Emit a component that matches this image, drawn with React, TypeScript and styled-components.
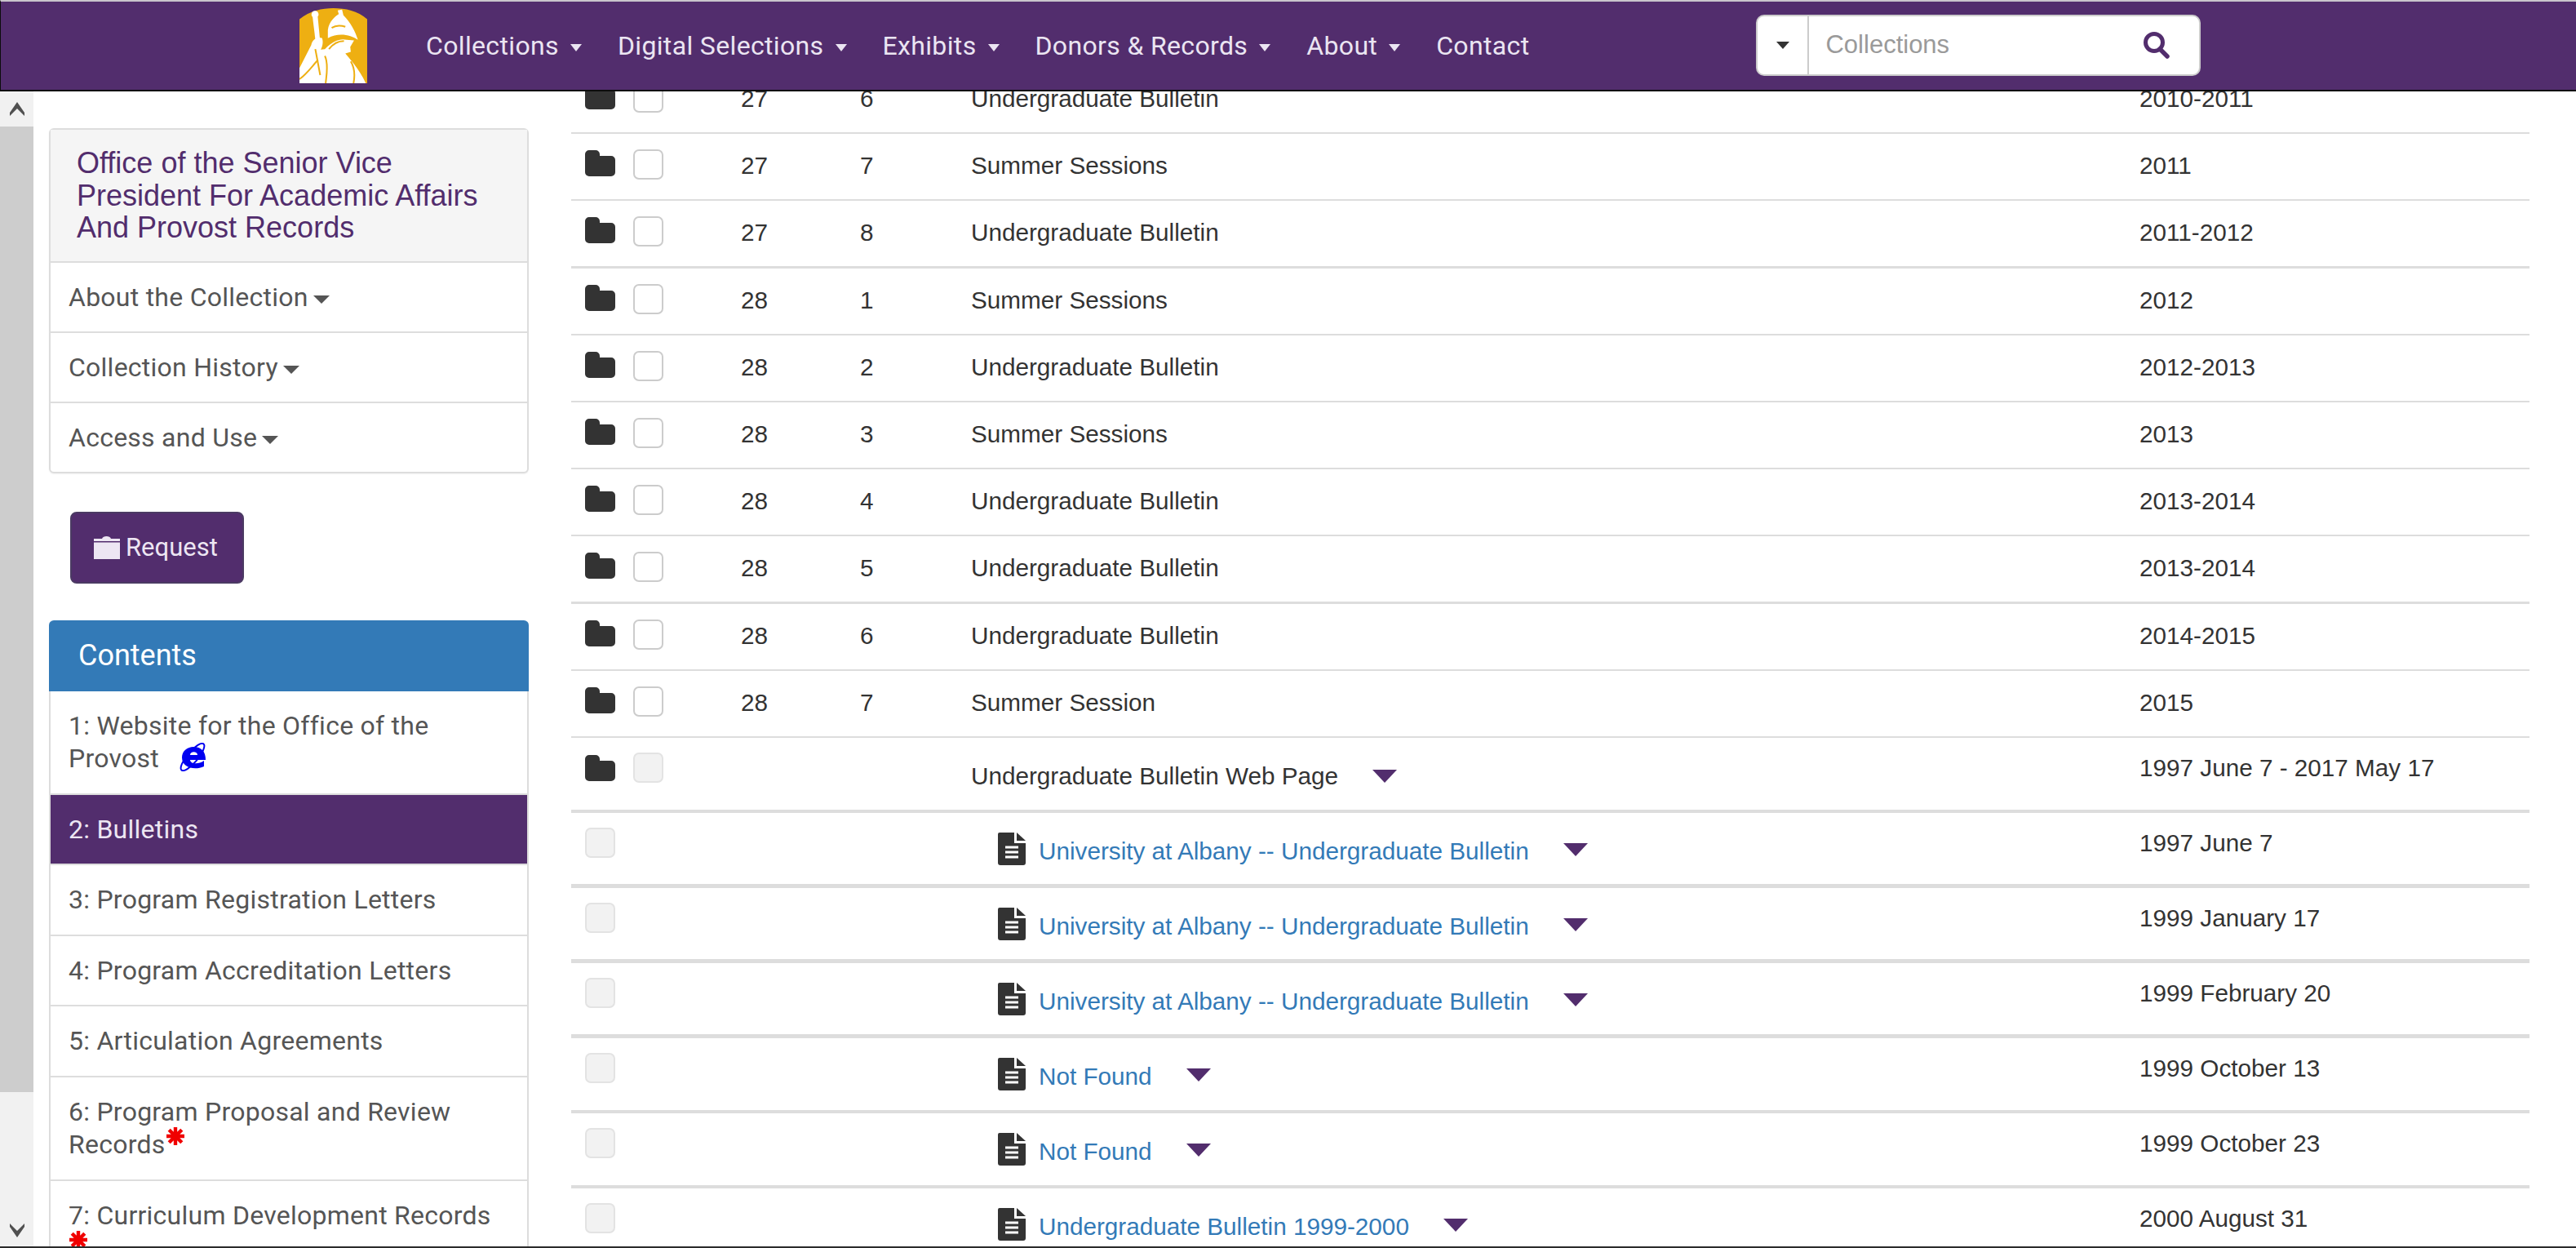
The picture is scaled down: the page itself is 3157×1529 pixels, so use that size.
import React from "react";
import styled, { createGlobalStyle } from "styled-components";

const PURPLE = "#522d6d";
const LINE = "#dddddd";
const ARIAL = `"Liberation Sans", Arial, sans-serif`;
const ROBOTO = `Roboto, "Liberation Sans", sans-serif`;

const Global = createGlobalStyle`
  html, body { margin: 0; padding: 0; height: 100%; overflow: hidden; background: #fff; }
  * { box-sizing: border-box; }
`;

const Page = styled.div`
  width: 3157px;
  height: 1529px;
  display: flex;
  flex-direction: column;
  overflow: hidden;
  background: #fff;
  border-bottom: 2px solid #2b2b2b;
  font-family: ${ARIAL};
`;

const Header = styled.header`
  flex: none;
  height: 112px;
  display: flex;
  align-items: center;
  background: ${PURPLE};
  border-top: 2px solid #c9c5cc;
  border-bottom: 2px solid #0c0c0c;
  border-left: 1px solid #0c0c0c;
  padding-left: 366px;
`;

const LogoMark = styled.svg`
  flex: none;
  width: 83px;
  height: 92px;
  margin-right: 50px;
`;

const NavItem = styled.a`
  flex: none;
  display: flex;
  align-items: center;
  gap: 14px;
  padding: 0 22px;
  margin-top: -1px;
  font: 400 32px/40px ${ROBOTO};
  letter-spacing: 0.35px;
  color: #ebe5f2;
`;

const NavCaret = styled.span`
  width: 0;
  height: 0;
  margin-top: 6px;
  border-left: 7px solid transparent;
  border-right: 7px solid transparent;
  border-top: 9px solid #ebe5f2;
`;

const SearchBox = styled.div`
  flex: none;
  width: 545px;
  height: 75px;
  margin-left: 256px;
  margin-top: -2px;
  display: flex;
  align-items: stretch;
  background: #fff;
  border: 2px solid #cccccc;
  border-radius: 10px;
`;

const SearchToggle = styled.div`
  flex: none;
  width: 63px;
  display: flex;
  align-items: center;
  justify-content: center;
  border-right: 2px solid #cccccc;
`;

const SearchCaret = styled.span`
  width: 0;
  height: 0;
  border-left: 8px solid transparent;
  border-right: 8px solid transparent;
  border-top: 9px solid #333;
`;

const SearchText = styled.div`
  flex: 1;
  display: flex;
  align-items: center;
  justify-content: space-between;
  padding: 0 36px 0 20px;
  font: 400 31px/40px ${ARIAL};
  color: #9a9a9a;
`;

const Body = styled.div`
  flex: 1;
  min-height: 0;
  display: flex;
`;

const Side = styled.aside`
  flex: none;
  width: 700px;
  display: flex;
  overflow: hidden;
`;

const ScrollBar = styled.div`
  flex: none;
  width: 41px;
  display: flex;
  flex-direction: column;
  background: #f1f1f1;
`;

const ScrollButton = styled.div<{ $h: number }>`
  flex: none;
  height: ${(p) => p.$h}px;
  display: flex;
  align-items: center;
  justify-content: center;
`;

const ScrollThumb = styled.div`
  flex: none;
  height: 1183px;
  background: #cdcdcd;
`;

const ScrollSpace = styled.div`
  flex: 1;
`;

const SideInner = styled.div`
  flex: none;
  width: 607px;
  padding: 45px 0 0 19px;
`;

const InfoPanel = styled.section`
  width: 588px;
  border: 2px solid ${LINE};
  border-radius: 6px;
  box-shadow: 0 1px 2px rgba(0, 0, 0, 0.05);
  background: #fff;
`;

const InfoTitle = styled.h2`
  margin: 0;
  padding: 21px 30px 21px 32px;
  background: #f5f5f5;
  font: 400 36px/39.6px ${ARIAL};
  color: ${PURPLE};
`;

const InfoItem = styled.div`
  height: 86px;
  display: flex;
  align-items: center;
  gap: 6px;
  padding-left: 22px;
  border-top: 2px solid ${LINE};
  font: 400 32px/40px ${ROBOTO};
  letter-spacing: 0.25px;
  color: #555;
`;

const SmallCaret = styled.span`
  width: 0;
  height: 0;
  margin-top: 6px;
  border-left: 10px solid transparent;
  border-right: 10px solid transparent;
  border-top: 10px solid #555;
`;

const RequestButton = styled.button`
  display: flex;
  align-items: center;
  gap: 7px;
  width: 213px;
  height: 88px;
  margin: 47px 0 45px 26px;
  padding: 0 0 0 27px;
  border: 2px solid #4b3a63;
  border-radius: 8px;
  background: ${PURPLE};
  font: 400 31px/40px ${ROBOTO};
  color: #ede6f3;
`;

const ContentsHead = styled.div`
  width: 588px;
  height: 87px;
  display: flex;
  align-items: center;
  padding-left: 36px;
  background: #337ab7;
  border-radius: 6px 6px 0 0;
  font: 400 36px/40px ${ROBOTO};
  color: #fff;
`;

const ContentsList = styled.div`
  width: 588px;
  border-left: 2px solid ${LINE};
  border-right: 2px solid ${LINE};
`;

const ContentsItem = styled.div<{ $active?: boolean }>`
  padding: 22px 20px 22px 22px;
  border-bottom: 2px solid ${LINE};
  font: 400 32px/40.5px ${ROBOTO};
  letter-spacing: 0.25px;
  color: ${(p) => (p.$active ? "#ede6f3" : "#555")};
  background: ${(p) => (p.$active ? PURPLE : "#fff")};
`;

const IeMark = styled.svg`
  width: 34px;
  height: 35px;
  margin-left: 24px;
  vertical-align: -5px;
`;

const Star = styled.svg`
  width: 24px;
  height: 24px;
  margin-top: -12px;
  vertical-align: 9px;
`;

const Main = styled.main`
  flex: none;
  width: 2400px;
  overflow: hidden;
`;

const Table = styled.div`
  margin-top: -30px;
  font: 400 29.7px/40px ${ARIAL};
  color: #333;
`;

const FolderIcon = styled.svg`
  flex: none;
  width: 37px;
  height: 32px;
`;

const Controls = styled.div`
  display: flex;
  align-items: center;
  gap: 22px;
  padding-left: 17px;
`;

const RowControls = styled(Controls)`
  padding-bottom: 2px;

  ${FolderIcon} {
    margin-bottom: 4px;
  }
`;

const TallControls = styled(Controls)`
  padding-top: 18px;
`;

const Row = styled.div<{ $rule: number }>`
  display: grid;
  grid-template-columns: 208px 146px 136px 1432px 1fr;
  align-items: center;
  height: ${(p) => 80 + p.$rule}px;
  padding-bottom: 3px;
  border-bottom: ${(p) => p.$rule}px solid ${LINE};
`;

const TallRow = styled.div<{ $rule: number }>`
  display: grid;
  grid-template-columns: 490px 1432px 1fr;
  align-items: start;
  height: 92px;
  border-bottom: ${(p) => p.$rule}px solid ${LINE};
`;

const Check = styled.span<{ $off?: boolean }>`
  flex: none;
  width: 37px;
  height: 37px;
  border: 2px solid ${(p) => (p.$off ? "#e3e3e3" : "#cccccc")};
  border-radius: 7px;
  background: ${(p) => (p.$off ? "#f2f2f2" : "#fff")};
`;

const DocIcon = styled.svg`
  flex: none;
  width: 34px;
  height: 40px;
  margin-right: 16px;
`;

const TitleCell = styled.div<{ $indent?: boolean }>`
  display: flex;
  align-items: ${(p) => (p.$indent ? "flex-start" : "center")};
  padding-top: ${(p) => (p.$indent ? 24 : 27)}px;
  padding-left: ${(p) => (p.$indent ? 33 : 0)}px;
`;

const DocLink = styled.a`
  margin-top: 3px;
  color: #337ab7;
`;

const RowCaret = styled.span`
  flex: none;
  width: 0;
  height: 0;
  margin-left: 42px;
  border-left: 15px solid transparent;
  border-right: 15px solid transparent;
  border-top: 16px solid ${PURPLE};
`;

const LinkCaret = styled(RowCaret)`
  margin-top: 13px;
`;

const DateCell = styled.div`
  padding-top: 17px;
`;

const Logo = () => (
  <LogoMark viewBox="82 30 248 275" aria-label="University at Albany logo">
    <path d="M82 70C120 40 165 30 206 30C250 30 295 40 330 70V305H82Z" fill="#eeaf12" />
    <g fill="#fff">
      <circle cx="139" cy="53" r="13" />
      <path d="M130 62h19l8 82h-17z" />
      <path d="M186 110C190 80 212 60 226 52L222 38L238 35L243 56C268 80 288 118 296 146C270 128 225 118 186 140Z" />
      <path d="M82 250L125 165C130 145 145 135 165 140C170 155 166 170 160 182L175 180C205 148 235 140 255 146L282 148L268 172L270 190L250 196C262 212 300 250 325 305H82Z" />
    </g>
    <g fill="none" stroke="#eeaf12" strokeWidth="6">
      <path d="M200 102C215 92 232 92 250 98" />
      <path d="M140 180L158 275" />
      <path d="M175 205C190 235 180 280 178 305" />
      <path d="M82 290C110 270 130 240 150 220" />
      <path d="M270 225C285 250 285 280 280 305" />
      <path d="M190 180C205 160 225 150 245 150" />
    </g>
  </LogoMark>
);

const Folder = () => (
  <FolderIcon viewBox="0 0 37 32">
    <path d="M0 5a5 5 0 0 1 5-5h8a5 5 0 0 1 5 5v2h14a5 5 0 0 1 5 5v15a5 5 0 0 1-5 5H5a5 5 0 0 1-5-5z" fill="#333" />
  </FolderIcon>
);

const Doc = () => (
  <DocIcon viewBox="0 0 34 40">
    <path d="M2 0H20V13H34V37a3 3 0 0 1-3 3H3a3 3 0 0 1-3-3V2a2 2 0 0 1 2-2Z" fill="#333" />
    <path d="M23 0L34 10H23Z" fill="#333" />
    <path d="M9 18H25M9 24H25M9 30H25" stroke="#fff" strokeWidth="3" />
  </DocIcon>
);

const Ie = () => (
  <IeMark viewBox="0 0 34 35">
    <ellipse cx="17" cy="17.500" rx="21" ry="6.500" transform="rotate(-50 17 17.500)" fill="none" stroke="#0000f0" strokeWidth="2" />
    <path d="M18 5C28 5 33 11 33 21H14C14 26 24 27 31 22V29C20 34 4 31 4 18C4 10 11 5 18 5ZM14 15H23C23 10 14 10 14 15Z" fill="#0000f0" fillRule="evenodd" />
  </IeMark>
);

const RedStar = () => (
  <Star viewBox="0 0 24 24">
    <g stroke="#f00000" strokeWidth="4.4">
      <path d="M12 1V23M1 12H23M4.200 4.200L19.800 19.800M4.200 19.800L19.800 4.200" />
    </g>
  </Star>
);

const boxes: [string, string, string, string][] = [
  ["27", "6", "Undergraduate Bulletin", "2010-2011"],
  ["27", "7", "Summer Sessions", "2011"],
  ["27", "8", "Undergraduate Bulletin", "2011-2012"],
  ["28", "1", "Summer Sessions", "2012"],
  ["28", "2", "Undergraduate Bulletin", "2012-2013"],
  ["28", "3", "Summer Sessions", "2013"],
  ["28", "4", "Undergraduate Bulletin", "2013-2014"],
  ["28", "5", "Undergraduate Bulletin", "2013-2014"],
  ["28", "6", "Undergraduate Bulletin", "2014-2015"],
  ["28", "7", "Summer Session", "2015"],
];

const docs: [string, string, number][] = [
  ["University at Albany -- Undergraduate Bulletin", "1997 June 7", 5],
  ["University at Albany -- Undergraduate Bulletin", "1999 January 17", 5],
  ["University at Albany -- Undergraduate Bulletin", "1999 February 20", 5],
  ["Not Found", "1999 October 13", 4],
  ["Not Found", "1999 October 23", 4],
  ["Undergraduate Bulletin 1999-2000", "2000 August 31", 4],
];

const navItems = ["Collections", "Digital Selections", "Exhibits", "Donors & Records", "About"];

export default function App() {
  return (
    <Page>
      <Global />
      <Header>
        <Logo />
        {navItems.map((n) => (
          <NavItem key={n}>
            {n}
            <NavCaret />
          </NavItem>
        ))}
        <NavItem>Contact</NavItem>
        <SearchBox>
          <SearchToggle>
            <SearchCaret />
          </SearchToggle>
          <SearchText>
            Collections
            <svg width="32" height="33" viewBox="0 0 32 33">
              <circle cx="13" cy="13" r="10.500" fill="none" stroke={PURPLE} strokeWidth="5" />
              <path d="M20 21L29 30" stroke={PURPLE} strokeWidth="5.500" strokeLinecap="round" />
            </svg>
          </SearchText>
        </SearchBox>
      </Header>
      <Body>
        <Side>
          <ScrollBar>
            <ScrollButton $h={43}>
              <svg width="18" height="17" viewBox="0 0 18 17">
                <path d="M9 0L18 13V17L9 8L0 17V13Z" fill="#505050" />
              </svg>
            </ScrollButton>
            <ScrollThumb />
            <ScrollSpace />
            <ScrollButton $h={40}>
              <svg width="18" height="17" viewBox="0 0 18 17">
                <path d="M9 17L18 4V0L9 9L0 0V4Z" fill="#505050" />
              </svg>
            </ScrollButton>
          </ScrollBar>
          <SideInner>
            <InfoPanel>
              <InfoTitle>Office of the Senior Vice President For Academic Affairs And Provost Records</InfoTitle>
              <InfoItem>
                About the Collection
                <SmallCaret />
              </InfoItem>
              <InfoItem>
                Collection History
                <SmallCaret />
              </InfoItem>
              <InfoItem>
                Access and Use
                <SmallCaret />
              </InfoItem>
            </InfoPanel>
            <RequestButton>
              <svg width="32" height="29" viewBox="0 0 32 29">
                <path d="M0 7V4H10C11 0 20 0 21 4H32V7H0ZM0 8.500H32V29H0Z" fill="#ede6f3" />
              </svg>
              Request
            </RequestButton>
            <ContentsHead>Contents</ContentsHead>
            <ContentsList>
              <ContentsItem>
                1: Website for the Office of the Provost
                <Ie />
              </ContentsItem>
              <ContentsItem $active>2: Bulletins</ContentsItem>
              <ContentsItem>3: Program Registration Letters</ContentsItem>
              <ContentsItem>4: Program Accreditation Letters</ContentsItem>
              <ContentsItem>5: Articulation Agreements</ContentsItem>
              <ContentsItem>
                6: Program Proposal and Review Records
                <RedStar />
              </ContentsItem>
              <ContentsItem>
                7: Curriculum Development Records <RedStar />
              </ContentsItem>
            </ContentsList>
          </SideInner>
        </Side>
        <Main>
          <Table>
            {boxes.map(([box, folder, title, date], i) => (
              <Row key={i} $rule={i === 2 || i === 7 ? 3 : 2}>
                <RowControls>
                  <Folder />
                  <Check />
                </RowControls>
                <div>{box}</div>
                <div>{folder}</div>
                <div>{title}</div>
                <div>{date}</div>
              </Row>
            ))}
            <TallRow $rule={4}>
              <TallControls>
                <Folder />
                <Check $off />
              </TallControls>
              <TitleCell>
                Undergraduate Bulletin Web Page
                <RowCaret />
              </TitleCell>
              <DateCell>1997 June 7 - 2017 May 17</DateCell>
            </TallRow>
            {docs.map(([title, date, rule], i) => (
              <TallRow key={i} $rule={rule}>
                <TallControls>
                  <Check $off />
                </TallControls>
                <TitleCell $indent>
                  <Doc />
                  <DocLink>{title}</DocLink>
                  <LinkCaret />
                </TitleCell>
                <DateCell>{date}</DateCell>
              </TallRow>
            ))}
          </Table>
        </Main>
      </Body>
    </Page>
  );
}
